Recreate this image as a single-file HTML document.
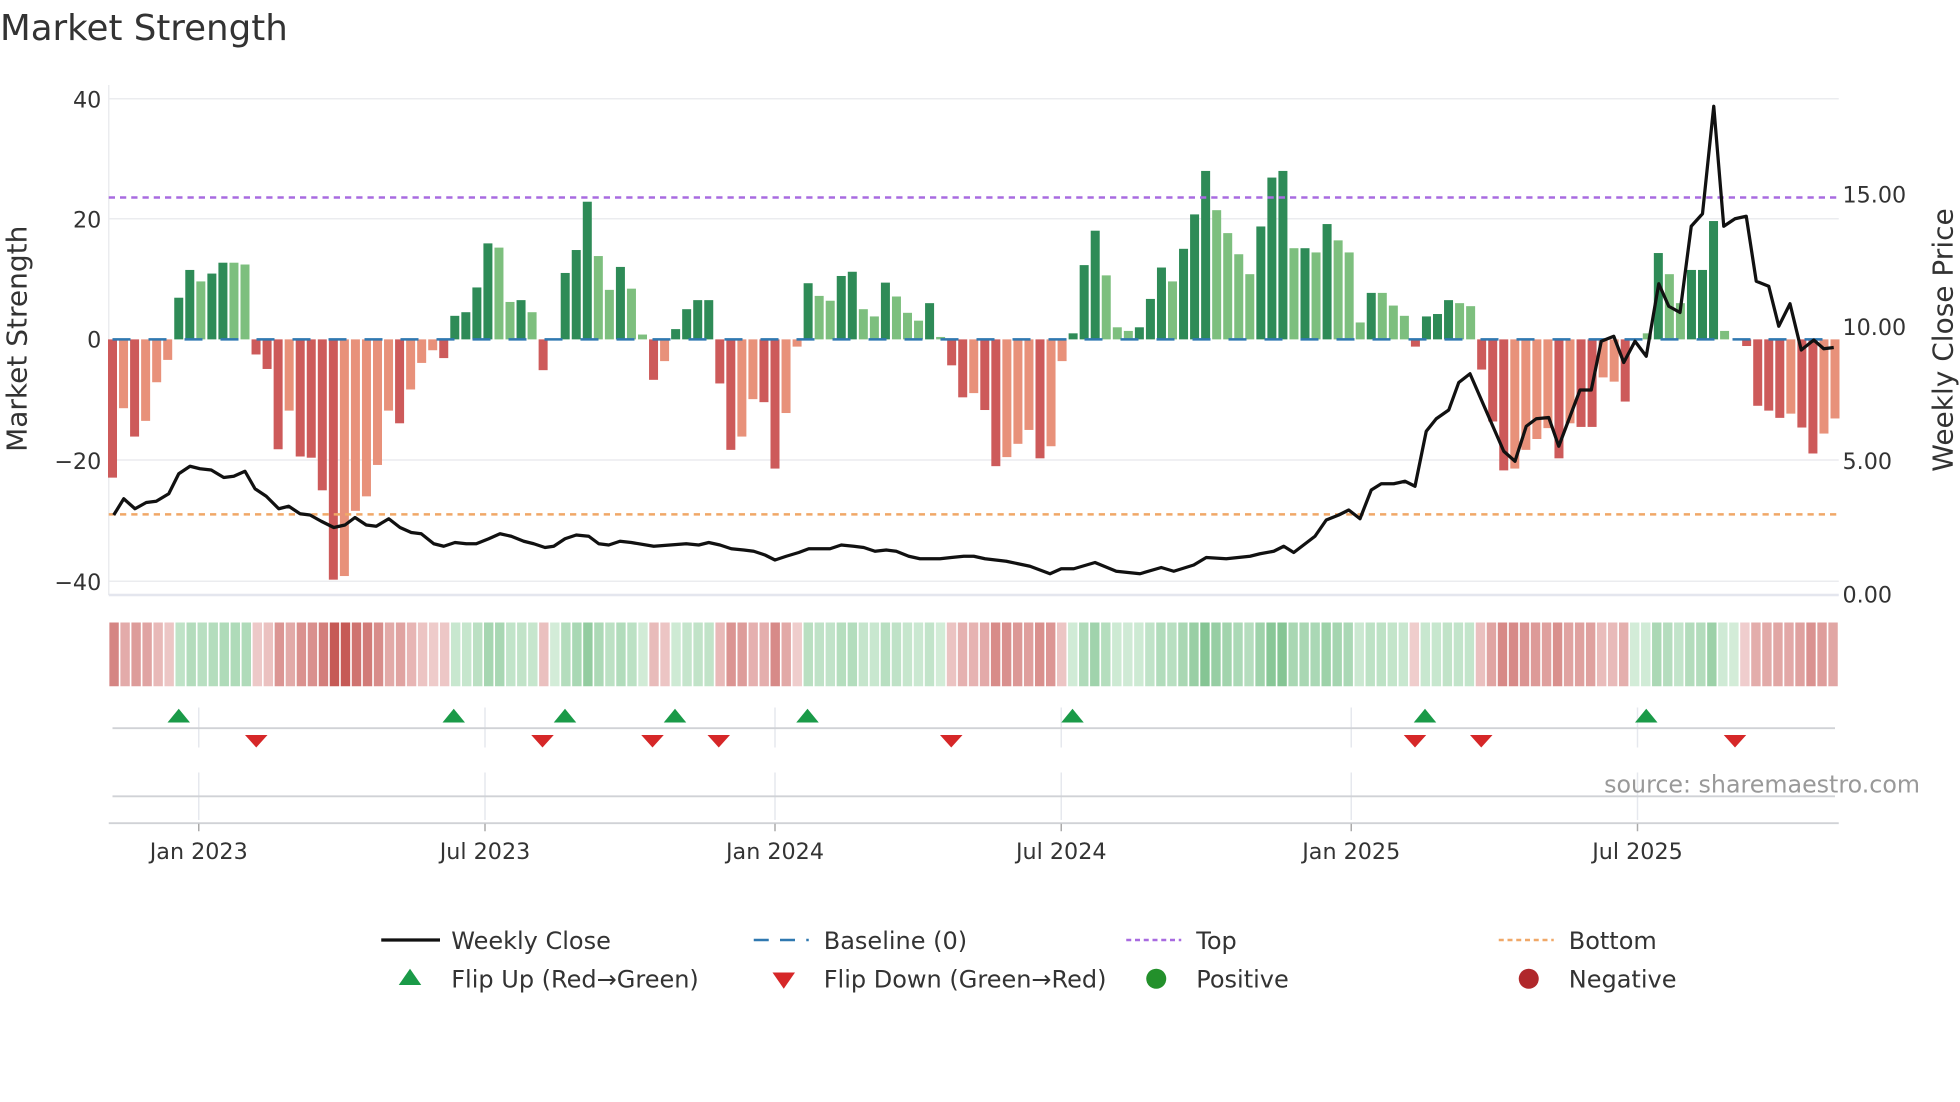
<!DOCTYPE html>
<html><head><meta charset="utf-8">
<style>
html,body{margin:0;padding:0;background:#fff;}
svg{display:block;font-family:"DejaVu Sans","Liberation Sans",sans-serif;}
</style></head>
<body>
<svg id="c" width="1960" height="1102" viewBox="0 0 1568 881.6" xmlns="http://www.w3.org/2000/svg">
<rect width="1568" height="881.6" fill="#fff"/>
<text x="0" y="32" font-size="28.5" fill="#333">Market Strength</text>
<!-- grid -->
<g stroke="#ebecef" stroke-width="1.2">
<line x1="87" y1="79" x2="1471" y2="79"/>
<line x1="87" y1="175" x2="1471" y2="175"/>
<line x1="87" y1="368" x2="1471" y2="368"/>
<line x1="87" y1="465" x2="1471" y2="465"/>
<line x1="87" y1="68" x2="87" y2="476"/>
<line x1="87" y1="476" x2="1471" y2="476" stroke="#e4e6ee" stroke-width="2"/>
</g>
<g font-size="17.8" fill="#333" text-anchor="end">
<text x="81" y="86">40</text><text x="81" y="182">20</text><text x="81" y="278">0</text>
<text x="81" y="375">−20</text><text x="81" y="472">−40</text>
</g>
<g font-size="17.8" fill="#333">
<text x="1474" y="162">15.00</text><text x="1474" y="268">10.00</text>
<text x="1474" y="375">5.00</text><text x="1474" y="482">0.00</text>
</g>
<text transform="translate(21,271) rotate(-90)" font-size="22.4" fill="#333" text-anchor="middle">Market Strength</text>
<text transform="translate(1562,272) rotate(-90)" font-size="22.4" fill="#333" text-anchor="middle">Weekly Close Price</text>
<g id="bars"></g>
<g id="heat"></g>
<line x1="87" y1="158" x2="1471" y2="158" stroke="#a86be0" stroke-width="2" stroke-dasharray="5 4"/>
<line x1="87" y1="411.5" x2="1471" y2="411.5" stroke="#f0a868" stroke-width="2" stroke-dasharray="5 4"/>
<line x1="90" y1="271.5" x2="1471" y2="271.5" stroke="#2f78b0" stroke-width="2" stroke-dasharray="14.4 14.4"/>
<polyline fill="none" stroke="#111" stroke-width="2.6" stroke-linejoin="round" points="91,412 99,399 108,407 117,402 125,401 135,395 143,379 152,373 160,375 169,376 179,382 187,381 196,377 204,391 213,397 223,407 231,405 240,411 248,412 257,417 267,422 276,420 284,414 293,420 301,421 311,415 320,422 329,426 337,427 347,435 355,437 364,434 373,435 381,435 391,431 400,427 409,429 419,433 427,435 436,438 443,437 452,431 461,428 471,429 479,435 487,436 496,433 505,434 523,437 549,435 559,436 567,434 576,436 585,439 595,440 603,441 612,444 620,448 629,445 639,442 647,439 664,439 673,436 683,437 691,438 700,441 709,440 717,441 727,445 736,447 752,447 761,446 771,445 779,445 788,447 805,449 824,453 832,456 840,459 849,455 859,455 876,450 893,457 912,459 929,454 939,457 955,452 965,446 981,447 1000,445 1008,443 1019,441 1027,437 1035,442 1052,429 1061,416 1071,412 1079,408 1088,415 1097,392 1105,387 1115,387 1124,385 1132,389 1141,345 1149,335 1159,328 1167,306 1176,299 1203,361 1212,369 1221,341 1229,335 1239,334 1247,357 1264,312 1273,312 1281,273 1291,269 1299,290 1308,273 1317,285 1327,227 1335,245 1344,250 1353,181 1362,171 1371,85 1379,181 1388,175 1397,173 1405,225 1415,229 1423,261 1432,243 1441,280 1451,272 1459,279 1467,278"/>
<!-- marker panel -->
<g stroke="#e6e8ee" stroke-width="1.2">
<line x1="159" y1="566" x2="159" y2="598"/><line x1="388" y1="566" x2="388" y2="598"/>
<line x1="620" y1="566" x2="620" y2="598"/><line x1="849" y1="566" x2="849" y2="598"/>
<line x1="1081" y1="566" x2="1081" y2="598"/><line x1="1310" y1="566" x2="1310" y2="598"/>
<line x1="159" y1="618" x2="159" y2="656"/><line x1="388" y1="618" x2="388" y2="656"/>
<line x1="620" y1="618" x2="620" y2="656"/><line x1="849" y1="618" x2="849" y2="656"/>
<line x1="1081" y1="618" x2="1081" y2="656"/><line x1="1310" y1="618" x2="1310" y2="656"/>
</g>
<line x1="90" y1="582.5" x2="1468" y2="582.5" stroke="#d0d2d6" stroke-width="1.5"/>
<line x1="90" y1="637" x2="1468" y2="637" stroke="#d0d2d6" stroke-width="1.5"/>
<line x1="87" y1="658.5" x2="1471" y2="658.5" stroke="#d0d2d6" stroke-width="1.5"/>
<g stroke="#aaa" stroke-width="1.2">
<line x1="159" y1="659" x2="159" y2="665"/><line x1="388" y1="659" x2="388" y2="665"/>
<line x1="620" y1="659" x2="620" y2="665"/><line x1="849" y1="659" x2="849" y2="665"/>
<line x1="1081" y1="659" x2="1081" y2="665"/><line x1="1310" y1="659" x2="1310" y2="665"/>
</g>
<g id="marks"></g>
<g font-size="17.8" fill="#333" text-anchor="middle">
<text x="159" y="687">Jan 2023</text><text x="388" y="687">Jul 2023</text>
<text x="620" y="687">Jan 2024</text><text x="849" y="687">Jul 2024</text>
<text x="1081" y="687">Jan 2025</text><text x="1310" y="687">Jul 2025</text>
</g>
<text x="1536" y="634" font-size="19" fill="#999" text-anchor="end">source: sharemaestro.com</text>
<!-- legend -->
<g font-size="19.2" fill="#333">
<line x1="305" y1="752" x2="352" y2="752" stroke="#111" stroke-width="2.6"/>
<text x="361" y="759">Weekly Close</text>
<line x1="603" y1="752" x2="647" y2="752" stroke="#2f78b0" stroke-width="2" stroke-dasharray="12 9"/>
<text x="659" y="759">Baseline (0)</text>
<line x1="901" y1="752" x2="945" y2="752" stroke="#a86be0" stroke-width="2" stroke-dasharray="4 3"/>
<text x="957" y="759">Top</text>
<line x1="1199" y1="752" x2="1243" y2="752" stroke="#f0a868" stroke-width="2" stroke-dasharray="4 3"/>
<text x="1255" y="759">Bottom</text>
<polygon points="319,788 337,788 328,775" fill="#1a9a48"/>
<text x="361" y="790">Flip Up (Red→Green)</text>
<polygon points="618,778 636,778 627,791" fill="#d62728"/>
<text x="659" y="790">Flip Down (Green→Red)</text>
<circle cx="925" cy="783" r="8" fill="#23902b"/>
<text x="957" y="790">Positive</text>
<circle cx="1223" cy="783" r="8" fill="#b0282b"/>
<text x="1255" y="790">Negative</text>
</g>
</svg>
<script>
var D="-22.9d,-11.4l,-16.1d,-13.5l,-7.1l,-3.4l,6.9d,11.5d,9.6l,10.9d,12.7d,12.7l,12.4l,-2.5d,-4.9d,-18.2d,-11.8l,-19.4d,-19.6d,-25d,-39.8d,-39.2l,-28.4l,-26l,-20.8l,-11.8l,-13.9d,-8.3l,-3.9l,-1.8l,-3.1d,3.9d,4.5d,8.6d,15.9d,15.2l,6.2l,6.5d,4.5l,-5.1d,0l,11d,14.8d,22.8d,13.8l,8.2l,12d,8.4l,0.8l,-6.7d,-3.6l,1.7d,5d,6.5d,6.5d,-7.3d,-18.3d,-16.1l,-9.9l,-10.4d,-21.4d,-12.2l,-1.2l,9.3d,7.2l,6.4l,10.5d,11.2d,5l,3.8l,9.4d,7.1l,4.4l,3.1l,6d,0.4l,-4.3d,-9.6d,-8.9l,-11.7d,-21d,-19.5l,-17.3l,-15l,-19.7d,-17.7l,-3.6l,1d,12.3d,18d,10.6l,2l,1.4l,2d,6.7d,11.9d,9.6l,15d,20.7d,27.9d,21.4l,17.6l,14.1l,10.8l,18.7d,26.8d,27.9d,15.1l,15.1d,14.4l,19.1d,16.4l,14.4l,2.8l,7.7d,7.7l,5.6l,3.9l,-1.2d,3.8d,4.2d,6.5d,6l,5.5l,-5d,-13.6d,-21.7d,-21.4l,-18.3l,-16.5l,-14.7l,-19.7d,-13.9l,-14.5d,-14.5d,-6.3l,-7l,-10.3d,0l,1l,14.3d,10.8l,6l,11.5d,11.5d,19.6d,1.4l,0l,-1.1d,-11d,-11.8d,-13d,-12.3l,-14.6d,-18.9d,-15.6l,-13.1l".split(",");
var ns="http://www.w3.org/2000/svg",bars=document.getElementById("bars"),heat=document.getElementById("heat"),marks=document.getElementById("marks");
var N=D.length,x0=90,dx=(1468-90)/(N-1),Y0=271.5,U=4.83;
function el(t,a,p){var e=document.createElementNS(ns,t);for(var k in a)e.setAttribute(k,a[k]);p.appendChild(e);return e;}
function mix(a,b,t){return "rgb("+[0,1,2].map(function(i){return Math.round(a[i]+(b[i]-a[i])*t)}).join(",")+")";}
for(var i=0;i<N;i++){
 var s=D[i],v=parseFloat(s),dark=s.slice(-1)=="d",x=x0+i*dx;
 var col=v>=0?(dark?"#2e8b57":"#7dbf7e"):(dark?"#cd5a5a":"#e8917a");
 if(Math.abs(v)>0.05){var h=Math.abs(v)*U;el("rect",{x:x-3.6,y:v>=0?Y0-h:Y0,width:7.2,height:h,fill:col},bars);}
 var t=Math.min(1,0.1+Math.abs(v)/40);
 var c=v>=0?mix([222,242,226],[110,186,128],t):mix([245,222,222],[198,90,86],t);
 el("rect",{x:87+i*(1384/N)+0.5,y:498,width:1384/N-1.3,height:51,fill:c},heat);
}
[143,363,452,540,646,858,1140,1317].forEach(function(x){el("polygon",{points:(x-9)+",578 "+(x+9)+",578 "+x+",567",fill:"#1a9a48"},marks);});
[205,434,522,575,761,1132,1185,1388].forEach(function(x){el("polygon",{points:(x-9)+",588 "+(x+9)+",588 "+x+",598",fill:"#d62728"},marks);});
</script>
</body></html>
